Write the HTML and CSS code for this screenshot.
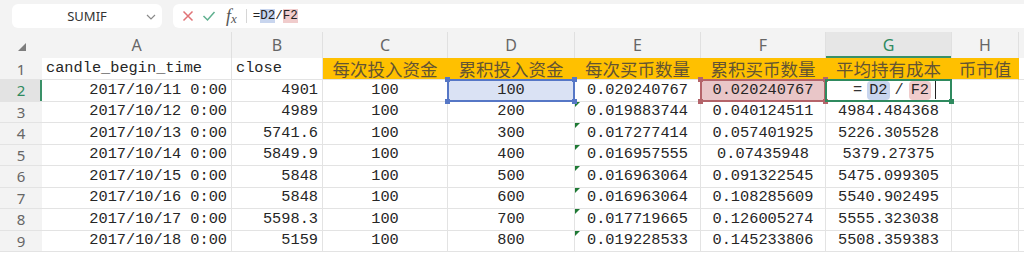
FILE: index.html
```html
<!DOCTYPE html>
<html lang="zh-CN">
<head>
    <meta charset="UTF-8">
    <title>SUMIF - 工作表</title>
    <link rel="stylesheet" href="styles.css">
</head>
<body>
    <div class="barra">
        <div class="nombre">
            <span>SUMIF</span>
            <svg class="chevron" width="10" height="6" viewBox="0 0 10 6"><polyline points="1,1 5,5 9,1" fill="none" stroke="#8a8a8a" stroke-width="1.2"/></svg>
        </div>
        <div class="formula">
            <svg class="icono" width="12" height="12" viewBox="0 0 12 12"><path d="M1.5 1.5 L10.5 10.5 M10.5 1.5 L1.5 10.5" stroke="#e07276" stroke-width="1.5" fill="none"/></svg>
            <svg class="icono" width="14" height="12" viewBox="0 0 14 12"><polyline points="1.5,6 5.5,10 12.5,2" stroke="#5fb08f" stroke-width="1.5" fill="none"/></svg>
            <span class="fx">f<sub>x</sub></span>
            <span class="sep"></span>
            <span class="texto">=<span class="ref-d">D2</span>/<span class="ref-f">F2</span></span>
        </div>
    </div>

    <div class="hoja">
        <!-- cabecera de columnas -->
        <div class="esq"><svg width="8" height="8" viewBox="0 0 8 8"><polygon points="8,0 8,8 0,8" fill="#7d7d7d"/></svg></div>
        <div class="col">A</div>
        <div class="col">B</div>
        <div class="col">C</div>
        <div class="col">D</div>
        <div class="col">E</div>
        <div class="col">F</div>
        <div class="col activa">G</div>
        <div class="col">H</div>
        <div class="col"></div>

        <!-- fila 1 -->
        <div class="fil">1</div>
        <div class="c l">candle_begin_time</div>
        <div class="c l">close</div>
        <div class="c m tit">每次投入资金</div>
        <div class="c m tit">累积投入资金</div>
        <div class="c m tit">每次买币数量</div>
        <div class="c m tit">累积买币数量</div>
        <div class="c m tit">平均持有成本</div>
        <div class="c m tit">币市值</div>
        <div class="c"></div>

        <!-- fila 2 -->
        <div class="fil activa">2</div>
        <div class="c r">2017/10/11 0:00</div>
        <div class="c r">4901</div>
        <div class="c m">100</div>
        <div class="c m sel sel-d">100<span class="caja"><i class="h tl"></i><i class="h tr"></i><i class="h bl"></i><i class="h br"></i></span></div>
        <div class="c m">0.020240767</div>
        <div class="c m sel sel-f">0.020240767<span class="caja"><i class="h tl"></i><i class="h tr"></i><i class="h bl"></i><i class="h br"></i></span></div>
        <div class="c m sel edit">
            <span class="eq">=</span><span class="ref-d big">D2</span><span class="eq">/</span><span class="ref-f big">F2</span><span class="cursor"></span>
            <span class="caja"><i class="h br"></i></span>
        </div>
        <div class="c"></div>
        <div class="c"></div>

        <div class="fil">3</div>
        <div class="c r">2017/10/12 0:00</div>
        <div class="c r">4989</div>
        <div class="c m">100</div>
        <div class="c m">200</div>
        <div class="c m txt">0.019883744</div>
        <div class="c m">0.040124511</div>
        <div class="c m">4984.484368</div>
        <div class="c"></div>
        <div class="c"></div>

        <div class="fil">4</div>
        <div class="c r">2017/10/13 0:00</div>
        <div class="c r">5741.6</div>
        <div class="c m">100</div>
        <div class="c m">300</div>
        <div class="c m txt">0.017277414</div>
        <div class="c m">0.057401925</div>
        <div class="c m">5226.305528</div>
        <div class="c"></div>
        <div class="c"></div>

        <div class="fil">5</div>
        <div class="c r">2017/10/14 0:00</div>
        <div class="c r">5849.9</div>
        <div class="c m">100</div>
        <div class="c m">400</div>
        <div class="c m txt">0.016957555</div>
        <div class="c m">0.07435948</div>
        <div class="c m">5379.27375</div>
        <div class="c"></div>
        <div class="c"></div>

        <div class="fil">6</div>
        <div class="c r">2017/10/15 0:00</div>
        <div class="c r">5848</div>
        <div class="c m">100</div>
        <div class="c m">500</div>
        <div class="c m txt">0.016963064</div>
        <div class="c m">0.091322545</div>
        <div class="c m">5475.099305</div>
        <div class="c"></div>
        <div class="c"></div>

        <div class="fil">7</div>
        <div class="c r">2017/10/16 0:00</div>
        <div class="c r">5848</div>
        <div class="c m">100</div>
        <div class="c m">600</div>
        <div class="c m txt">0.016963064</div>
        <div class="c m">0.108285609</div>
        <div class="c m">5540.902495</div>
        <div class="c"></div>
        <div class="c"></div>

        <div class="fil">8</div>
        <div class="c r">2017/10/17 0:00</div>
        <div class="c r">5598.3</div>
        <div class="c m">100</div>
        <div class="c m">700</div>
        <div class="c m txt">0.017719665</div>
        <div class="c m">0.126005274</div>
        <div class="c m">5555.323038</div>
        <div class="c"></div>
        <div class="c"></div>

        <div class="fil">9</div>
        <div class="c r">2017/10/18 0:00</div>
        <div class="c r">5159</div>
        <div class="c m">100</div>
        <div class="c m">800</div>
        <div class="c m txt">0.019228533</div>
        <div class="c m">0.145233806</div>
        <div class="c m">5508.359383</div>
        <div class="c"></div>
        <div class="c"></div>
    </div>
</body>
</html>
```

FILE: styles.css
```css
body {
    margin: 0;
    height: 255px;
    overflow: hidden;
    background-color: #ffffff;
    font-family: "Liberation Mono", "Noto Sans CJK SC", monospace;
}

/* barra de fórmulas */
.barra {
    display: flex;
    gap: 11px;
    height: 32px;
    padding: 4px 0 4px 12px;
    box-sizing: border-box;
    background-color: #f3f3f3;
}

.nombre {
    position: relative;
    display: flex;
    align-items: center;
    justify-content: center;
    width: 150px;
    background-color: #fff;
    border-radius: 6px;
    font-family: "Noto Sans", sans-serif;
    font-size: 13px;
    color: #333;
}

.nombre .chevron {
    position: absolute;
    right: 6px;
    top: 10px;
}

.formula {
    flex: 1;
    display: flex;
    align-items: center;
    margin-right: -10px;
    padding-left: 9px;
    background-color: #fff;
    border-radius: 6px;
}

.icono {
    margin-right: 8px;
}

.fx {
    margin-left: 2px;
    font-family: "Liberation Serif", serif;
    font-style: italic;
    font-size: 18px;
    line-height: 1;
    color: #555;
}

.fx sub {
    font-size: 13px;
    vertical-align: -1px;
}

.sep {
    width: 1px;
    height: 14px;
    margin: 0 6px 0 9px;
    background-color: #d6d6d6;
}

.texto {
    font-size: 12.5px;
    color: #222;
}

.ref-d {
    background-color: #c8d5ee;
}

.ref-f {
    background-color: #f0cccc;
}

/* hoja */
.hoja {
    display: grid;
    grid-template-columns: 42px 190px 91px 125px 127px 126px 125px 126px 67px 1fr;
    grid-template-rows: 26px 22px repeat(8, 21.5px);
}

.esq,
.col,
.fil {
    display: flex;
    align-items: center;
    justify-content: center;
    background-color: #f3f3f3;
    font-family: "Noto Sans", sans-serif;
    color: #666;
}

.esq {
    padding: 4px 0 0 2px;
}

.col {
    font-size: 16px;
    border-right: 1px solid #e0e0e0;
}

.col.activa {
    background-color: #e6e6e6;
    color: #2f8a5f;
    box-shadow: inset 0 -2px 0 #3a9168;
}

.fil {
    font-size: 15px;
    border-bottom: 1px solid #e3e3e3;
}

.fil.activa {
    background-color: #e3e3e3;
    color: #2f8a5f;
    box-shadow: inset -2px 0 0 #3a9168;
}

.c {
    position: relative;
    display: flex;
    align-items: center;
    padding: 0 4px;
    border-right: 1px solid #e3e3e3;
    border-bottom: 1px solid #e3e3e3;
    font-size: 15.3px;
    line-height: 1;
    color: #262626;
    white-space: nowrap;
    overflow: hidden;
}

.l { justify-content: flex-start; }
.r { justify-content: flex-end; }
.m { justify-content: center; }

.tit {
    padding: 0;
    overflow: visible;
    background-color: #ffc000;
    border-right-color: #ffc000;
    font-family: "Noto Sans CJK SC", sans-serif;
    font-size: 17.5px;
    color: #645433;
}

/* triángulo verde: número guardado como texto */
.txt::before {
    content: "";
    position: absolute;
    top: 0;
    left: 0;
    border-top: 5px solid #1f7a35;
    border-right: 5px solid transparent;
}

/* selecciones */
.sel {
    overflow: visible;
    z-index: 2;
}

.sel-d {
    background-color: #dae2f4;
}

.sel-f {
    background-color: #e9c6c8;
}

.caja {
    position: absolute;
    top: -1px;
    left: -1px;
    right: -1px;
    bottom: -1px;
    border: 2px solid #5677c6;
}

.sel-f .caja {
    border-color: #b4646a;
}

.edit .caja {
    border-color: #2f8a5f;
}

.h {
    position: absolute;
    width: 5px;
    height: 5px;
    background-color: #5677c6;
}

.sel-f .h {
    background-color: #b4646a;
}

.edit .h {
    background-color: #2f8a5f;
}

.tl { top: -4px; left: -4px; }
.tr { top: -4px; right: -4px; }
.bl { bottom: -4px; left: -4px; }
.br { bottom: -4px; right: -4px; }

.edit {
    gap: 3px;
    padding-left: 14px;
}

.eq {
    color: #333;
    padding: 0 2px;
}

.big {
    padding: 2px 2px;
    border-radius: 4px;
}

.cursor {
    width: 1px;
    height: 18px;
    margin-left: 1px;
    background-color: #222;
}
```
